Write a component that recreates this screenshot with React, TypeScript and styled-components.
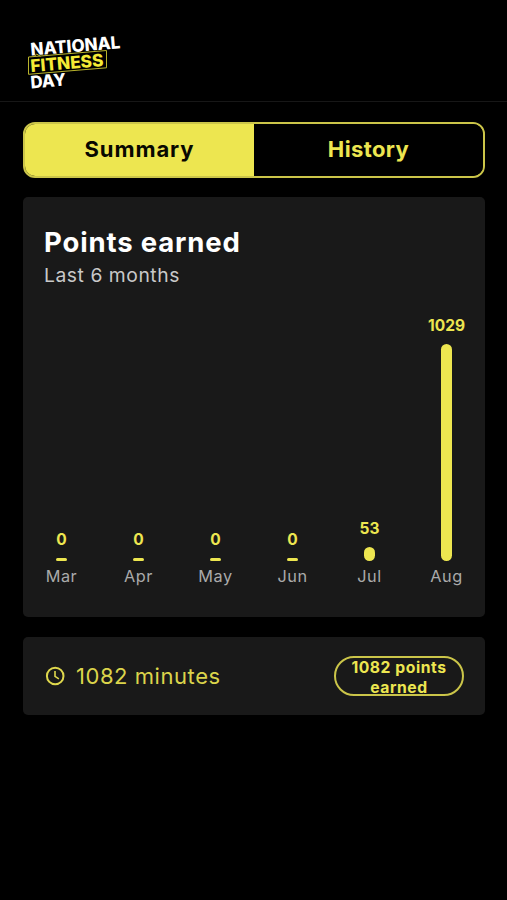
import React from "react";
import styled, { createGlobalStyle } from "styled-components";

const yellow = "#ede650";
const outline = "#cbc549";

const GlobalStyle = createGlobalStyle`
  * { box-sizing: border-box; }
  html, body { margin: 0; background: #000; }
  body { font-family: Inter, "Noto Sans", sans-serif; }
`;

const Screen = styled.div`
  display: flex;
  flex-direction: column;
  width: 507px;
  height: 900px;
  background: #000;
  overflow: hidden;
`;

const Header = styled.header`
  flex: none;
  height: 102px;
  padding: 30px 0 0 22px;
  border-bottom: 1px solid #171717;
`;

const Logo = styled.svg`
  display: block;
  font-family: Inter, sans-serif;
  font-weight: 800;
`;

const Content = styled.main`
  display: flex;
  flex-direction: column;
  gap: 20px;
  padding: 20px 22px 0 23px;
`;

const Tabs = styled.nav`
  display: grid;
  grid-template-columns: 1fr 1fr;
  height: 56px;
  margin-bottom: -1px;
  border: 2px solid ${outline};
  border-radius: 12px;
  overflow: hidden;
`;

const Tab = styled.button<{ $active?: boolean; $spacing: number }>`
  display: flex;
  align-items: center;
  justify-content: center;
  padding: 0 0 2px;
  border: 0;
  background: ${(p) => (p.$active ? yellow : "#000")};
  color: ${(p) => (p.$active ? "#080800" : yellow)};
  font: 650 22px/28px Inter, sans-serif;
  letter-spacing: ${(p) => p.$spacing}px;
`;

const Card = styled.section`
  border-radius: 5px;
  background: #191919;
`;

const ChartCard = styled(Card)`
  display: flex;
  flex-direction: column;
  height: 420px;
  padding-top: 28px;
`;

const Title = styled.h1`
  margin: 0 0 0 21px;
  color: #fff;
  font-size: 27.5px;
  line-height: 34px;
  font-weight: 700;
  letter-spacing: 0.85px;
`;

const Subtitle = styled.p`
  margin: 3px 0 0 21px;
  color: #c9c9c9;
  font-size: 19.3px;
  line-height: 26px;
  letter-spacing: 0.55px;
`;

const Chart = styled.div`
  display: grid;
  grid-template-columns: repeat(6, 1fr);
  height: 298px;
`;

const Column = styled.div`
  display: flex;
  flex-direction: column;
  align-items: center;
  justify-content: flex-end;
`;

const Value = styled.span`
  color: ${yellow};
  font-size: 15.5px;
  line-height: 20px;
  font-weight: 700;
`;

const Bar = styled.div`
  width: 11px;
  margin-top: 8px;
  border-radius: 6px;
  background: ${yellow};
`;

const Month = styled.span`
  margin-top: 5px;
  color: #aaa;
  font-size: 16.3px;
  line-height: 20px;
  letter-spacing: 0.5px;
`;

const TotalCard = styled(Card)`
  display: flex;
  align-items: center;
  height: 78px;
  padding: 0 21px 0 22px;
`;

const Minutes = styled.span`
  flex: 1;
  margin-left: 11px;
  color: #dbd44b;
  font-size: 22px;
  line-height: 28px;
  font-weight: 400;
  letter-spacing: 0.55px;
`;

const Pill = styled.div`
  width: 130px;
  height: 40px;
  border: 2px solid ${outline};
  border-radius: 20px;
  color: ${yellow};
  font-size: 15.7px;
  line-height: 19.5px;
  font-weight: 700;
  letter-spacing: 0.55px;
  text-align: center;
`;

const data = [
  { month: "Mar", points: 0, height: 3 },
  { month: "Apr", points: 0, height: 3 },
  { month: "May", points: 0, height: 3 },
  { month: "Jun", points: 0, height: 3 },
  { month: "Jul", points: 53, height: 14 },
  { month: "Aug", points: 1029, height: 217 },
];

const BrandLogo = () => (
  <Logo width="110" height="66" viewBox="22 30 110 66" aria-label="National Fitness Day">
    <path d="M28.5 57 106.5 50.5v17.3L28.5 74.3Z" fill="none" stroke="#b9b42c" strokeWidth="1" />
    <path d="m34 57 2.5-3 4 2.3" fill="none" stroke="#b9b42c" strokeWidth="1" />
    <g fontSize="17.3">
      <text transform="translate(31 55.5) rotate(-4.7)" textLength="90" lengthAdjust="spacingAndGlyphs" fill="#fff">NATIONAL</text>
      <text transform="translate(31 72) rotate(-4.7)" textLength="73" lengthAdjust="spacingAndGlyphs" fill="#f5ea35">FITNESS</text>
      <text transform="translate(31 88.5) rotate(-4.7)" textLength="35.5" lengthAdjust="spacingAndGlyphs" fill="#fff">DAY</text>
    </g>
  </Logo>
);

const ClockIcon = () => (
  <svg width="20" height="20" viewBox="0 0 20 20" fill="none" stroke="#dfd84d" strokeWidth="2">
    <circle cx="10.2" cy="10" r="8.3" />
    <path d="M10 5v5.3l3.9 2.5" strokeWidth="1.6" />
  </svg>
);

export default function App() {
  return (
    <Screen>
      <GlobalStyle />
      <Header>
        <BrandLogo />
      </Header>
      <Content>
        <Tabs>
          <Tab $active $spacing={0.9}>Summary</Tab>
          <Tab $spacing={0.4}>History</Tab>
        </Tabs>
        <ChartCard>
          <Title>Points earned</Title>
          <Subtitle>Last 6 months</Subtitle>
          <Chart>
            {data.map((d) => (
              <Column key={d.month}>
                <Value>{d.points}</Value>
                <Bar style={{ height: d.height }} />
                <Month>{d.month}</Month>
              </Column>
            ))}
          </Chart>
        </ChartCard>
        <TotalCard>
          <ClockIcon />
          <Minutes>1082 minutes</Minutes>
          <Pill>1082 points earned</Pill>
        </TotalCard>
      </Content>
    </Screen>
  );
}
